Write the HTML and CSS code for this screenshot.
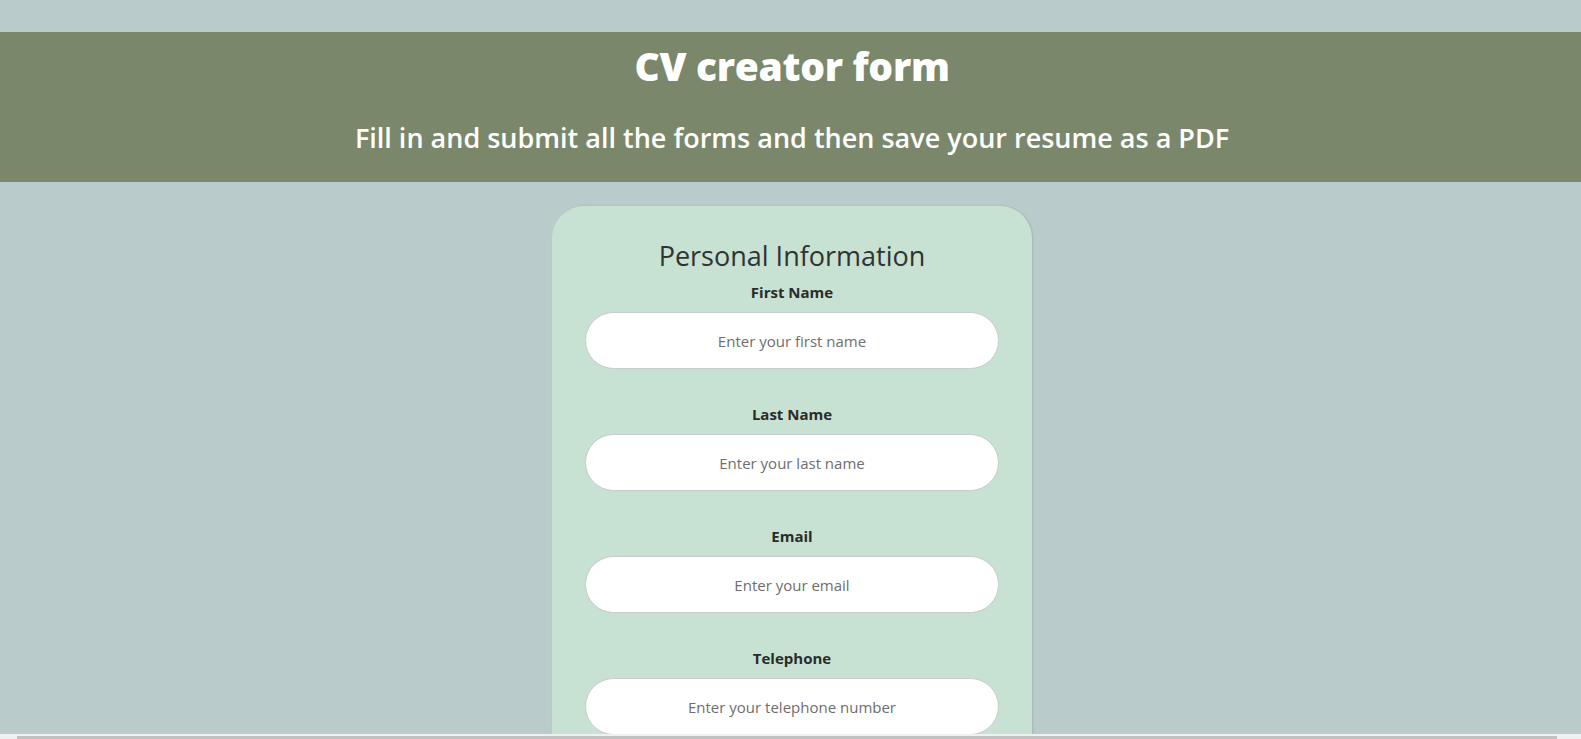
FILE: index.html
```html
<!DOCTYPE html>
<html lang="en">
<head>
<meta charset="utf-8">
<title>CV creator form</title>
<link rel="stylesheet" href="styles.css">
</head>
<body>
<header class="banner">
  <h1 class="banner-title">CV creator form</h1>
  <h2 class="banner-sub">Fill in and submit all the forms and then save your resume as a PDF</h2>
</header>
<main class="page">
  <form class="card">
    <h3 class="card-title">Personal Information</h3>
    <div class="field">
      <label class="field-label" for="fn">First Name</label>
      <input class="field-input" id="fn" type="text" placeholder="Enter your first name">
    </div>
    <div class="field">
      <label class="field-label" for="ln">Last Name</label>
      <input class="field-input" id="ln" type="text" placeholder="Enter your last name">
    </div>
    <div class="field">
      <label class="field-label" for="em">Email</label>
      <input class="field-input" id="em" type="email" placeholder="Enter your email">
    </div>
    <div class="field">
      <label class="field-label" for="tel">Telephone</label>
      <input class="field-input" id="tel" type="tel" placeholder="Enter your telephone number">
    </div>
  </form>
</main>
<div class="hscroll"><div class="hscroll-thumb"></div></div>
</body>
</html>
```

FILE: styles.css
```css
html, body {
  margin: 0;
  padding: 0;
}
body {
  background: #b9cbcb;
  font-family: "Open Sans", "Noto Sans", sans-serif;
  color: #2b2d2b;
  overflow: hidden;
  height: 739px;
}
.banner {
  margin-top: 32px;
  height: 150px;
  background: #7a876a;
  color: #fff;
  display: flex;
  flex-direction: column;
  align-items: center;
  padding-left: 3px;
  box-sizing: border-box;
}
.banner-title {
  margin: 10px 0 0;
  font-size: 39px;
  font-weight: 800;
  line-height: 48px;
  letter-spacing: -0.3px;
}
.banner-sub {
  margin: 30px 0 0;
  font-size: 27px;
  font-weight: 600;
  line-height: 36px;
}
.page {
  display: flex;
  justify-content: center;
  padding-top: 24px;
  padding-left: 3px;
}
.card {
  width: 480px;
  box-sizing: border-box;
  background: #c7e1d2;
  border-radius: 32px;
  padding: 30px 33px 40px;
  display: flex;
  flex-direction: column;
  align-items: stretch;
  box-shadow: 1px 0 2px rgba(120, 140, 140, 0.35);
}
.card-title {
  margin: 0 0 6px;
  text-align: center;
  font-size: 27px;
  font-weight: 400;
  line-height: 40px;
  color: #2f3331;
}
.field {
  display: flex;
  flex-direction: column;
  align-items: center;
  gap: 10px;
  margin-bottom: 35px;
}
.field-label {
  font-size: 15px;
  font-weight: 700;
  line-height: 20px;
  color: #2a2c2a;
}
.field-input {
  width: 100%;
  height: 57px;
  box-sizing: border-box;
  border: 1px solid #c8cccc;
  border-radius: 28.5px;
  background: #fff;
  text-align: center;
  font-family: "Open Sans", "Noto Sans", sans-serif;
  font-size: 15px;
  color: #333;
  outline: none;
}
.field-input::placeholder {
  color: #6e6e6e;
}
.hscroll {
  position: fixed;
  left: 0;
  right: 0;
  bottom: 0;
  height: 5px;
  background: #eef1f1;
}
.hscroll-thumb {
  position: absolute;
  left: 17px;
  right: 24px;
  bottom: 0;
  height: 3px;
  background: #c1c1c1;
}
```
